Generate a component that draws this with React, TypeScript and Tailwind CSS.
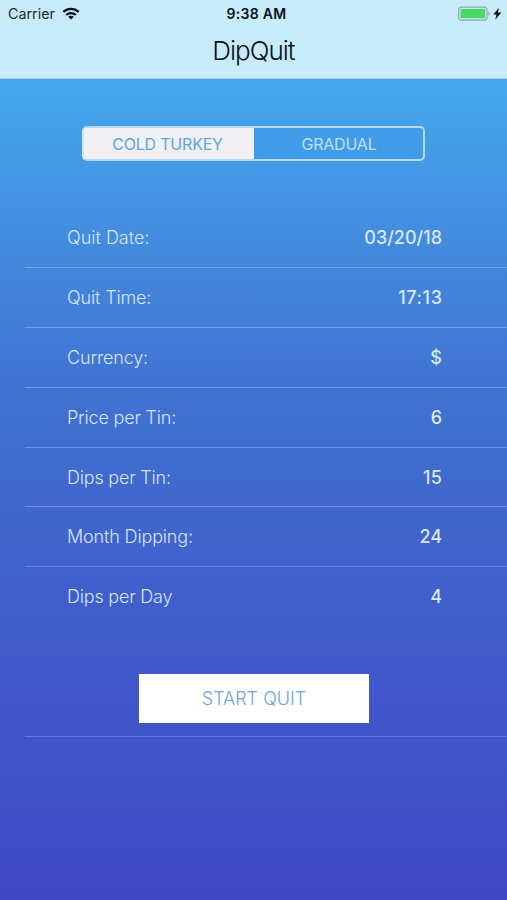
const rows = [
  { label: "Quit Date:", value: "03/20/18", labelSpacing: "tracking-[0px]", valueSpacing: "tracking-[0px]" },
  { label: "Quit Time:", value: "17:13", labelSpacing: "tracking-[-0.15px]", valueSpacing: "tracking-[0.6px] -mr-[0.6px]" },
  { label: "Currency:", value: "$", labelSpacing: "tracking-[-0.15px]", valueSpacing: "tracking-[0px]" },
  { label: "Price per Tin:", value: "6", labelSpacing: "tracking-[-0.2px]", valueSpacing: "tracking-[0px]" },
  { label: "Dips per Tin:", value: "15", labelSpacing: "tracking-[-0.2px]", valueSpacing: "tracking-[0.4px] -mr-[0.4px]" },
  { label: "Month Dipping:", value: "24", labelSpacing: "tracking-[-0.15px]", valueSpacing: "tracking-[0px]" },
  { label: "Dips per Day", value: "4", labelSpacing: "tracking-[-0.2px]", valueSpacing: "tracking-[0px]" },
];

function WifiIcon() {
  return (
    <svg className="h-[13px] w-[18px]" viewBox="0 0 18 13" fill="none" stroke="#07131b" strokeWidth="2.3">
      <path d="M1.3 4.9C5.6.8 12.4.8 16.7 4.9" />
      <path d="M4.2 8C6.9 5.4 11.1 5.4 13.8 8" />
      <path d="M9 12.6L6.1 9.8C7.7 8.3 10.3 8.3 11.9 9.8Z" fill="#07131b" stroke="none" />
    </svg>
  );
}

function BatteryIcon() {
  return (
    <svg className="h-4 w-[44px]" viewBox="0 0 44 16">
      <rect x="0.6" y="1.1" width="28.4" height="13" rx="3" fill="none" stroke="#8ba6b4" strokeWidth="1.2" />
      <rect x="2.4" y="2.9" width="24.8" height="9.4" rx="1.3" fill="#4bd964" />
      <path d="M30.4 5.4v4.4c2-.8 2-3.6 0-4.4Z" fill="#8ba6b4" />
      <path d="M41 1.8L35.2 8.4h3.3l-1.3 5.4L43.4 6.6h-3.5Z" fill="#07131b" />
    </svg>
  );
}

export default function App() {
  return (
    <div className="flex h-[900px] w-[507px] flex-col overflow-hidden bg-[linear-gradient(to_bottom,#44a8ee_80px,#4388dc_260px,#4071d0_400px,#4060cc_580px,#4155ca_720px,#4047c3_900px)] font-['Inter','Liberation_Sans',sans-serif]">
      <header className="h-[79px] shrink-0 border-b border-[#9fcbe3] bg-[#c8ebfa]">
        <div className="grid h-[27px] grid-cols-3 items-center pr-[5px] pl-2 text-[14px] text-[#1b2b34]">
          <div className="flex items-center gap-[7px]">
            <span className="text-[14.3px]">Carrier</span>
            <WifiIcon />
          </div>
          <span className="pl-[3px] text-center font-semibold tracking-[0.3px] whitespace-nowrap text-[#07131b]">9:38 AM</span>
          <div className="flex justify-end">
            <BatteryIcon />
          </div>
        </div>
        <h1 className="pt-px text-center text-[26px] leading-[46px] font-light tracking-[-1px] text-[#07131b]">DipQuit</h1>
      </header>

      <main>
        <div className="mt-[47px] ml-[82px] flex h-[35px] w-[343px] overflow-hidden rounded-[5px] border-2 border-[#b4d8f6] border-l-[#d6e8f8] bg-[#f0f0f5] text-[16px]">
          <button className="w-[170px] bg-[#f0f0f5] pr-[3px] tracking-[-0.2px] text-[#5aa5e2]">COLD TURKEY</button>
          <button className="flex-1 bg-[#429be6] pl-px tracking-[-0.2px] text-[#c2e0f7]">GRADUAL</button>
        </div>

        <ul className="mt-[47px] ml-[25px]">
          {rows.map((row) => (
            <li
              key={row.label}
              className="flex h-[59.9px] items-center justify-between border-b border-white/25 pr-[65px] pl-[42px] text-[18px] last:border-transparent"
            >
              <span className={`font-light text-[#d6e5fb] ${row.labelSpacing}`}>{row.label}</span>
              <span className={`font-medium text-[#dbe7fb] ${row.valueSpacing}`}>{row.value}</span>
            </li>
          ))}
        </ul>

        <div className="ml-[25px] border-b border-white/20 pt-[46.7px] pb-[13px]">
          <button className="ml-[114px] block h-[49px] w-[230px] bg-white text-[18px] font-light text-[#6ba5dc]">START QUIT</button>
        </div>
      </main>
    </div>
  );
}
